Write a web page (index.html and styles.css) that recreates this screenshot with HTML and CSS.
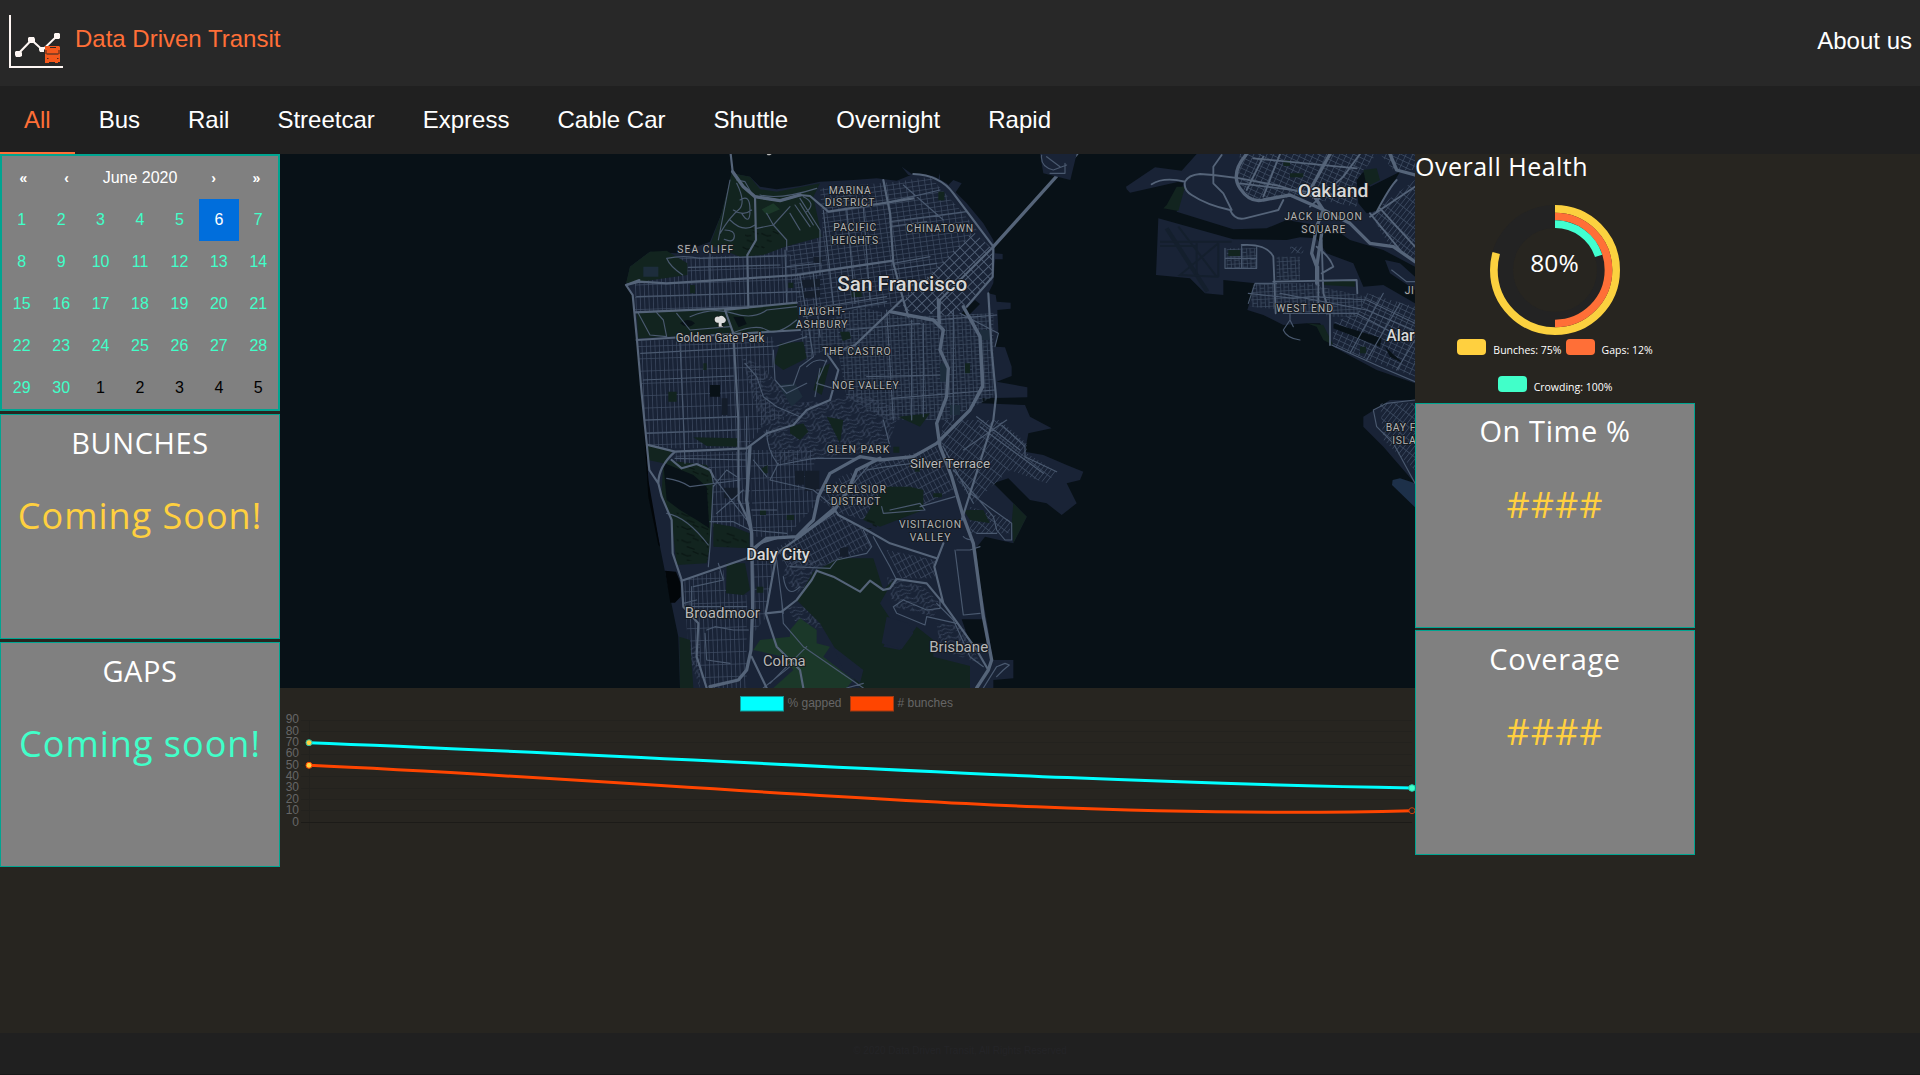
FILE: index.html
```html
<!DOCTYPE html>
<html lang="en">
<head>
<meta charset="utf-8">
<title>Data Driven Transit</title>
<link rel="stylesheet" href="styles.css">
</head>
<body>
<header class="topbar">
  <svg class="logo" width="56" height="56" viewBox="0 0 56 56">
    <path d="M2 1V53H55" fill="none" stroke="#fff7f4" stroke-width="2"/>
    <path d="M10 40L23.500 26L34.500 36L49.500 21.500" fill="none" stroke="#fff7f4" stroke-width="2"/>
    <path d="M8 37h5l1 2v3l-2 1H8l-1-2v-3zM21 23h5l1 2v3l-2 1h-4l-1-2v-3zM32 33h4v5h-4l-1-2v-2zM47 19h4l1 1v4l-1 1h-4l-1-1v-4z" fill="#fff7f4"/>
    <path d="M37 32h14l1 1v15h-2v1h-3v-1h-6v1h-4z" fill="#f4581c"/>
    <path d="M42 33.500h6M38.500 40h12" stroke="#282828"/>
    <path d="M38 36v4M51 36v4M39 44.500h1.500M49 44.500h1.500" stroke="#4a2a1e"/>
  </svg>
  <h1 class="brand">Data Driven Transit</h1>
  <a class="about">About us</a>
</header>
<nav class="tabs">
  <a class="tab active">All</a><a class="tab">Bus</a><a class="tab">Rail</a><a class="tab">Streetcar</a><a class="tab">Express</a><a class="tab">Cable Car</a><a class="tab">Shuttle</a><a class="tab">Overnight</a><a class="tab">Rapid</a>
</nav>
<main class="dashboard">
  <section class="left">
    <div class="calendar">
      <div class="cal-nav"><b>«</b><b>‹</b><span>June 2020</span><b>›</b><b>»</b></div>
      <div class="days">
        <span>1</span><span>2</span><span>3</span><span>4</span><span>5</span><span class="selected">6</span><span>7</span>
        <span>8</span><span>9</span><span>10</span><span>11</span><span>12</span><span>13</span><span>14</span>
        <span>15</span><span>16</span><span>17</span><span>18</span><span>19</span><span>20</span><span>21</span>
        <span>22</span><span>23</span><span>24</span><span>25</span><span>26</span><span>27</span><span>28</span>
        <span>29</span><span>30</span><span class="next">1</span><span class="next">2</span><span class="next">3</span><span class="next">4</span><span class="next">5</span>
      </div>
    </div>
    <div class="card"><h2>BUNCHES</h2><p class="yellow">Coming Soon!</p></div>
    <div class="card"><h2>GAPS</h2><p class="mint">Coming soon!</p></div>
  </section>

  <section class="center">
    <svg class="map" width="1135" height="534" viewBox="-960 12 3405 1602">
      <defs>
        <pattern id="avenues" width="13" height="37" patternUnits="userSpaceOnUse" patternTransform="rotate(-2)"><path class="st" d="M1 0V37M0 1H13"/></pattern>
        <pattern id="blocks" width="19" height="14" patternUnits="userSpaceOnUse" patternTransform="rotate(-8)"><path class="st" d="M1 0V14M0 1H19"/></pattern>
        <pattern id="soma" width="22" height="20" patternUnits="userSpaceOnUse" patternTransform="rotate(-44)"><path class="st wide" d="M1 0V20M0 1H22"/></pattern>
        <pattern id="mission" width="24" height="22" patternUnits="userSpaceOnUse" patternTransform="rotate(-3)"><path class="st" d="M1 0V22M0 1H24M12 0V22M12 12H24"/></pattern>
        <pattern id="slant" width="13" height="24" patternUnits="userSpaceOnUse" patternTransform="rotate(-28)"><path class="st" d="M1 0V24M0 1H13"/></pattern>
        <pattern id="eastgrid" width="18" height="15" patternUnits="userSpaceOnUse" patternTransform="rotate(25)"><path class="st" d="M1 0V15M0 1H18"/></pattern>
        <pattern id="diag" width="12" height="30" patternUnits="userSpaceOnUse" patternTransform="rotate(38)"><path class="st" d="M1 0V30M0 1H12"/></pattern>
        <pattern id="hills" width="64" height="40" patternUnits="userSpaceOnUse" patternTransform="rotate(-25)"><path class="st" d="M0 8C16 -4 22 26 38 16S52 0 64 8M0 21C16 9 20 39 36 29S52 13 64 21M0 34C18 24 22 48 40 40S54 26 64 34M12 0V12M38 16V32M52 20V40"/></pattern>
        <pattern id="ridges" width="60" height="40" patternUnits="userSpaceOnUse"><path d="M4 10L22 18L34 16M20 30L44 38M38 4L56 12" fill="none" stroke="#0a1714" stroke-width="4"/></pattern>
      </defs>
      <rect class="water" x="-960" y="12" width="3405" height="1602"/>

      <!-- Peninsula -->
      <path class="land" d="M395 70L450 80L480 110L530 118L600 108L660 95L760 90L830 85L890 92L940 72L1000 78L1040 100L1100 160L1150 220L1180 270L1185 310L1208 312V328H1185L1180 400L1165 430L1187 435L1190 455L1232 458V476L1192 480L1195 540L1185 590L1215 592L1235 650V678L1190 695L1282 712V742L1145 745V760L1275 765L1290 800L1355 835L1285 850L1275 905L1330 915L1400 945L1450 965L1440 990L1400 1000L1430 1060L1385 1095L1340 1060L1290 1050L1225 985L1180 1000L1240 1060L1280 1100L1240 1180L1155 1160L1128 1195L1140 1300L1165 1440L1178 1530H1240V1585L1180 1590V1614H240L235 1460L210 1340L180 1190L150 1040L135 880L128 780L110 540L98 440L78 405L90 350L150 305L230 310L290 290L330 275L365 190Z"/>
      <path d="M95 430L112 560L135 810L145 990L180 1190L175 1185L145 1040L130 810ZM195 1262L228 1265L242 1300V1340L225 1358H211Z" fill="#020609"/>
      <path class="land" d="M1085 100L1065 130L1040 110L1060 90ZM905 50L940 75H925ZM1020 68V90H1014Z"/>

      <!-- Street grids -->
      <path fill="url(#avenues)" d="M200 325L440 315L560 290L600 375V460L105 487V400ZM113 572L520 560V650L470 720L560 810H133ZM133 810H500L440 895H140ZM225 905H450V1130L340 1020L230 940ZM450 900H640L650 1060L560 1160H460ZM250 1290L370 1260L380 1330L440 1335V1614H320L265 1500ZM460 1200H530L500 1400L460 1450ZM330 1020L440 1010V1130H330Z"/>
      <path fill="url(#blocks)" d="M660 115L890 95L990 80L1090 190L1130 240L980 385L900 470L600 480L560 290L670 260Z"/>
      <path fill="url(#soma)" d="M1120 245L1180 300L1175 390L1060 500L905 480L915 445Z"/>
      <path fill="url(#mission)" d="M600 545L780 470L900 500L1180 490V740L1040 810H860L740 740L710 580L620 630Z"/>
      <path fill="url(#slant)" d="M660 1050L720 980L860 930L1010 890L1060 1020L960 1070L850 1050L830 1120L720 1090ZM520 1200L700 1090L800 1140L815 1190L700 1240L560 1250ZM860 1200L1005 1230V1285L900 1285Z"/>
      <path fill="url(#diag)" d="M1030 810H1200L1280 880V910L1370 965L1340 1000L1230 960L1120 1060L1065 980L1020 880ZM1110 1070L1230 1110V1150L1110 1150Z"/>
      <path fill="url(#hills)" d="M425 620L490 650L580 760L690 750L780 730L900 780L860 900L650 900L500 850L470 780ZM480 820L640 790L820 820L840 900L640 930L530 940ZM560 1230L700 1230L690 1260L640 1290L590 1330L550 1280ZM560 1370L620 1370L680 1430L600 1440ZM860 1280L970 1310L1020 1360L1000 1400L880 1370ZM1010 1420L1090 1430L1140 1540L1020 1500ZM860 1590L970 1580V1614H860ZM260 1490L300 1480V1614L280 1560Z"/>

      <!-- Parks -->
      <path class="park" d="M395 70L450 80L480 118L530 125L660 100L640 140L665 260L555 290L490 315L420 320L330 285L365 190ZM78 400L90 350L150 305L200 302L262 340V375L120 395ZM110 490L360 478L590 458L600 540L395 550L115 565ZM540 580L610 575L620 625L550 660L522 640ZM660 655L690 640L665 735L640 720ZM140 887L220 900L190 940L145 930ZM190 930L320 945L340 980L330 1190L320 1240L230 1245L215 1110L185 1030ZM340 1120L400 1130L448 1150V1195L340 1190ZM380 1240L435 1240L450 1320L430 1335L378 1330ZM280 862L412 865V890L320 888ZM570 830L610 820L625 845L600 870L570 850ZM680 800L730 810L720 880ZM850 1010L930 1010L970 1020V1080L840 1130L790 1110ZM640 1265L720 1225L820 1225L850 1320L880 1290L840 1360L880 1420L850 1490L900 1500L950 1430L1000 1470V1520L1110 1548V1614H780L720 1520L660 1420L590 1350ZM1090 1080L1150 1080L1170 1120L1110 1110ZM895 800L990 790L960 830ZM238 1460L270 1470L280 1614H240ZM1240 1060L1280 1100L1240 1180L1235 1120Z"/>
      <path class="land" d="M860 1400L925 1420L940 1450L905 1498L845 1480ZM700 1490L790 1560L780 1600L730 1560Z"/>
      <path class="field" d="M570 1440L600 1405L650 1440V1480L690 1490L670 1520L760 1590L740 1614H520L580 1560L550 1520L460 1500L480 1470L570 1460ZM485 178L520 160L540 178L500 195Z"/>
      <path fill="url(#ridges)" d="M440 230L555 240L480 305H425ZM205 940L325 950V1230L230 1235V1080ZM350 1140L440 1150V1190H350ZM790 1100L830 1110V1140L795 1135Z"/>
      <path class="water" d="M190 938L280 975L320 1010L328 1135L290 1110L240 1080L200 1050ZM1085 1408H1150L1160 1480H1110ZM400 500l30 0 10 22-24 10zM240 520q25-20 45 0q-20 20-45 0zM1085 490l40-40 15 12-38 38zM330 705h30v35h-30z"/>
      <path class="civic" d="M605 390l55-4v24l-50 4zM608 425l52-5v22l-48 3zM640 320h25v18h-25zM615 962h43v60h-43zM585 962h28v42h-28zM372 1013h42v32h-42zM365 745h18v50h-18zM720 1195l25-5v30h-25z"/>
      <path class="slope" d="M535 705L585 700L608 740L575 770ZM130 350h45v30h-45zM1050 765h30v30h-30zM1020 640h22v55h-22zM1140 540h30v30h-30z"/>
      <path class="park" d="M270 405h15v25h-15zM565 398h15v16h-15zM755 425h30v16h-30zM1015 125h18v26h-18zM205 725h25v30h-25zM310 640h10v20h-10zM480 1080h18v15h-18zM560 1095h22v15h-22zM1095 640h15v30h-15zM880 890h18v18h-18zM720 545l28 0 5 20-25 8zM470 1310h20v18h-20zM485 955l18-10v25h-12zM945 955h14v10h-14zM1000 1030h26v12h-26z"/>

      <!-- Secondary roads -->
      <g class="roads minor">
        <path d="M410 90L435 95L455 130M410 100Q440 160 415 180T360 250M400 180Q430 200 455 180M390 210Q430 250 465 225M500 190L520 225L560 270V300M470 235L520 225L570 170M600 145L660 240V375M610 140Q650 160 620 185M420 150q30-20 30 30t-25 10M375 240q30 0 28 20t-30 8M200 325Q250 315 300 325L560 318M200 325Q210 350 248 375M265 352L540 345M560 350L660 340M555 300L560 460M330 310V470M110 440L600 425M115 490L150 555L200 560L190 510L170 488M230 490L270 540L390 530M270 500Q340 470 400 490T500 480L590 470M395 550Q470 520 500 540T590 510M390 90L355 270M570 190L600 240M585 165L630 230M600 160L640 225M480 135Q540 150 650 115"/>
        <path d="M122 610L400 595L530 588L620 560M130 690L400 678M133 810L410 800M240 580L250 810L255 940M520 600L525 690L560 730L620 700M435 640L470 680L490 740L530 770L600 800M630 560L640 620L600 650L580 705L540 710M620 650Q650 620 680 635M660 655L645 740M680 630L650 700L700 715M600 375L630 560M640 370L660 560M670 180L700 460M740 175L765 460M790 170L810 450M860 158L1020 120M870 215L1100 185M870 230L980 215M910 105L1030 210M880 340L990 320M870 360L1010 340M890 415L1000 390M600 480L860 440M610 500L860 455M740 540L960 520M860 480L880 810M935 510V810M970 520V800M800 680L1020 675M875 745L1185 720M1000 510L1130 500L1190 495M1080 490L1195 550L1185 590M1060 480V810"/>
        <path d="M140 850L410 840M225 925L440 930M330 1115L400 1115L450 1140L560 1150M335 970L340 1000L330 1190L325 1250M200 985Q240 990 270 1010L420 990M200 1090Q260 1100 325 1185M340 1010L380 960L410 980M340 980L440 1110M350 1090L430 1020M440 800V1110M455 1080L530 1080M500 840Q500 900 535 945L640 925H780M535 940L510 990L640 1020L700 1070L715 1095M460 930L500 980M650 1020H700M800 960L860 950L1020 930M870 890L850 810M760 1000L820 930M870 1080L960 1060L975 1080L850 1090L845 1070M960 1070L1065 1040M1030 890L1120 1060M1060 960L1180 1100L1190 1140L1215 1170H1235V1120L1110 1030M1130 1150H1190M1200 820L1275 890V920L1370 965M1130 800L1260 900M1220 810L1090 900M1140 830L1330 970M1070 1200H1110L1140 1190M1065 1200L1090 1395L1140 1390M1090 1160Q1100 1170 1120 1170"/>
        <path d="M280 1310L370 1290L355 1240M250 1360L290 1350M275 1310V1370L440 1370M320 1440L345 1430L400 1440L445 1440M315 1450L320 1530L390 1540M530 1230L550 1390M570 1250L690 1255L710 1230L800 1210L815 1190L790 1140M600 1310Q560 1350 550 1280M880 1370L910 1350L980 1380L1020 1375V1350M880 1370L890 1390L975 1425L980 1400L1070 1420M1010 1360L1060 1410L1110 1520L1150 1550M820 1160L870 1250L890 1290M1190 1580L1210 1560L1228 1545L1215 1540L1190 1550L1150 1614M510 1600L620 1490M490 1614L570 1550M740 1614L790 1600M545 1350L550 1420L610 1490L790 1614"/>
      </g>
      <!-- Highways and arterials -->
      <g class="roads">
        <path d="M392 12L398 65L430 110L465 140L540 152L600 135L630 138L685 185L860 158L940 145"/>
        <path d="M465 140L468 270L442 315L445 472L375 480L400 550L415 810L416 1050L440 1100L455 1150"/>
        <path d="M80 405L118 395L200 400L440 385L590 375L700 358L880 332M110 570L400 552L600 540M105 487L445 472L590 458M850 90L870 190L880 340L910 450L925 500"/>
        <path d="M118 390L78 405L98 435L110 560L125 730L140 880L148 960L175 1000L185 1040L215 1110L218 1210L245 1290L250 1370L295 1420L290 1520L320 1614M140 884L225 905L440 895L500 850L580 825L620 780L690 750L715 660L680 610M225 905Q175 950 175 1000M215 930L245 955L290 942L330 960L340 980"/>
        <path d="M940 72Q1020 75 1060 130L1180 290L1178 380L1100 470M1180 290L1020 450L1015 500M905 450L765 585L680 615M1165 430L1175 600L1188 740L1180 810L1085 1110M1110 500L1140 560L1150 700L1110 780"/>
        <path d="M245 1292L440 1225L480 1180L530 1165M715 1095L800 1140L870 1180L1010 1225M715 1095L700 1075L600 1160L530 1210L510 1320L497 1390L530 1490L600 1560L610 1614M497 1390L545 1385L590 1350L635 1290L650 1262L700 1280L780 1325L810 1292L850 1320L870 1315L890 1287L980 1300L1030 1360M1030 1180L1003 1250L1030 1360L1080 1430L1130 1500L1165 1560M455 1520L500 1614"/>
        <g class="freeway">
          <path d="M398 65L430 110L465 140L540 152L600 135M1430 12L1180 290M870 485L1000 510L1030 540L1020 600L1045 655L1040 740L1010 820L1020 890L1055 980L1090 1100L1120 1180L1150 1400L1175 1530L1165 1560L1130 1614M1015 450L1018 520M1090 470L1140 560L1148 710L1110 780L1010 880L940 920L840 930L780 920L690 970L655 1040L640 1110L590 1160L500 1165L455 1200M840 925L770 960L745 1020L700 1085L590 1165M450 890L440 1050L455 1150L458 1370L453 1500L440 1560L415 1590L330 1610"/>
        </g>
      </g>

      <!-- East Bay -->
      <path class="land" d="M1320 12H1430L1411 90L1330 70ZM1578 110L1580 118L1590 128L1736 95L1750 100L1730 185L1900 238L2000 235L2060 210L2200 235L2250 270L2350 300L2445 350V12H1790L1745 62L1665 52ZM1675 205L1900 268L2060 270L2100 262L2150 265L2180 310L2260 340L2290 410L2350 405L2445 460V700L2330 660L2200 590L2160 520H2120L2050 525L1990 495L1942 480L1966 400L1870 390V435L1815 430L1770 385L1668 375ZM2355 330L2400 340L2445 380V420L2370 370ZM2290 800L2370 750H2445V1000L2350 890L2290 830Z"/>
      <path d="M2378 990L2400 985L2445 1000V1072L2376 1005Z" fill="#1d3049"/>
      <path fill="url(#eastgrid)" d="M1920 12H2330L2270 90V170L2100 140L1960 150L1910 100ZM2340 12H2445V60L2380 60ZM2300 430L2445 470V680L2200 590V520L2280 480Z"/>
      <path fill="url(#diag)" d="M2310 190L2445 90V330L2370 290ZM2070 290H2110V310H2070ZM2340 760H2445V960L2350 870Z"/>
      <path fill="url(#mission)" d="M1880 295H1970V355H1880ZM2030 320H2100V390H2030ZM1960 400H2160V490L1950 470ZM2160 410L2300 440L2270 500H2180Z"/>
      <path class="water" d="M2270 90L2290 65L2310 110L2400 65L2350 150L2340 180L2300 190L2275 160ZM2200 520L2345 565L2340 590L2200 535ZM2355 590L2410 640L2370 620Z"/>
      <path class="park" d="M1700 165L1730 110H1755L1735 183L1690 175ZM2120 520L2170 525L2200 585L2170 570L2150 530ZM2170 395L2265 390V410L2170 405ZM2290 60L2330 55L2340 90L2300 110ZM1885 300h35v18h-35zM2050 30h20v18h-20zM2070 70h40v12h-40zM2280 590h18v20h-18z"/>
      <path d="M1700 235L1822 425" stroke="#141f2d" stroke-width="13" fill="none"/>
      <path d="M1680 275H1895M1680 288H1790M1735 230L1850 380L1740 375L1855 280M1790 280V370M1855 280V380" stroke="#141f2d" stroke-width="6" fill="none"/>
      <g class="roads east">
        <path d="M1655 103Q1690 80 1755 95M1755 95Q1765 75 1800 72L1840 75L1920 85L2040 108L2140 140M1755 95Q1750 120 1775 135Q1820 165 1890 180Q1905 212 1935 205L2035 180L2050 150M1865 15L1840 50V100L1870 130L1895 180"/>
        <path class="freeway" d="M1940 12Q1890 70 1920 115T1990 150L2070 135L2160 175L2250 220L2310 280L2380 290L2445 335M2190 12L2130 120L2170 180L2150 230L2135 310L2150 350M2165 250L2150 350V400M2370 12L2390 60L2445 75"/>
        <path d="M2280 12L2230 80L2130 170M1990 20L1940 120M1920 100L2240 140M1960 25L2270 55M2040 12L1990 140M2330 185Q2370 110 2390 90M2310 190L2400 300M2340 175L2445 290M2445 110L2310 200M2155 350V490M2165 270L2170 430L2190 490V585M2020 395L2270 390L2272 430M1925 285Q2000 280 2020 320L2027 490M2150 290Q2190 320 2200 350L2165 370"/>
      </g>
      <g class="roads minor">
        <path d="M1875 295V355H1970V290M1925 285V355M1875 325H1970M1945 430L2080 445L2140 440L2300 450L2445 520M1945 460L1965 400L2030 400M2040 430L2300 480L2440 540M2050 490H2270L2400 560M2195 585L2340 650L2445 695M2350 430L2250 610M2400 460L2300 630M2445 570L2390 660M2070 490V510L2050 540Q2060 565 2100 570M2070 510L2080 530M2375 360L2420 395H2445M2445 750L2360 760L2320 780L2330 830L2380 880L2445 1000M1325 15Q1320 50 1360 60L1400 45M1340 20L1380 50M1350 70H1395V40"/>
      </g>

      <!-- Place names -->
      <g class="labels district">
        <text x="749" y="131" textLength="126">MARINA</text><text x="749" y="168" textLength="149">DISTRICT</text>
        <text x="764" y="244" textLength="129">PACIFIC</text><text x="764" y="282" textLength="141">HEIGHTS</text>
        <text x="1019" y="246" textLength="200">CHINATOWN</text><text x="316" y="309" textLength="168">SEA CLIFF</text>
        <text x="665" y="495" textLength="138">HAIGHT-</text><text x="665" y="533" textLength="155">ASHBURY</text>
        <text x="769" y="615" textLength="205">THE CASTRO</text><text x="796" y="718" textLength="200">NOE VALLEY</text>
        <text x="774" y="909" textLength="188">GLEN PARK</text><text x="767" y="1029" textLength="181">EXCELSIOR</text><text x="767" y="1066" textLength="149">DISTRICT</text>
        <text x="990" y="1135" textLength="186">VISITACION</text><text x="990" y="1173" textLength="122">VALLEY</text>
        <text x="2169" y="210" textLength="233">JACK LONDON</text><text x="2170" y="248" textLength="132">SQUARE</text>
        <text x="2114" y="487" textLength="170">WEST END</text>
        <text class="from" x="2414" y="432">JI</text><text class="from" x="2357" y="843">BAY F</text><text class="from" x="2377" y="881">ISLA</text>
      </g>
      <g class="labels">
        <text x="907" y="423" font-size="61" textLength="390" lengthAdjust="spacingAndGlyphs">San Francisco</text>
        <text x="2199" y="142" font-size="57" textLength="212" lengthAdjust="spacingAndGlyphs">Oakland</text>
        <text x="534" y="1231" font-size="51" textLength="191" lengthAdjust="spacingAndGlyphs">Daly City</text>
        <text class="from" x="2359" y="573" font-size="49" textLength="85" lengthAdjust="spacingAndGlyphs">Alar</text>
      </g>
      <g class="labels town">
        <text x="367" y="1405" font-size="45" textLength="225" lengthAdjust="spacingAndGlyphs">Broadmoor</text>
        <text x="1076" y="1506" font-size="45" textLength="177" lengthAdjust="spacingAndGlyphs">Brisbane</text>
        <text x="553" y="1548" font-size="45" textLength="128" lengthAdjust="spacingAndGlyphs">Colma</text>
        <text x="1050" y="955" font-size="39" textLength="240" lengthAdjust="spacingAndGlyphs">Silver Terrace</text>
        <text x="360" y="576" font-size="36" textLength="266" lengthAdjust="spacingAndGlyphs">Golden Gate Park</text>
      </g>
      <path d="M356 530V518Q344 520 344 508Q345 498 356 500Q367 494 374 503Q382 510 373 518L365 520V527L372 530Z" fill="#ddd" stroke="#111" stroke-width="3" paint-order="stroke"/>
      <path d="M500 12H515L510 16H503Z" fill="#bbb"/>
    </svg>

    <svg class="chart" width="1135" height="152" viewBox="280 688 1135 152">
      <path d="M301 720.500H1412M301 731.500H1412M301 742.500H1412M301 754.500H1412M301 765.500H1412M301 776.500H1412M301 788.500H1412M301 799.500H1412M301 810.500H1412M309.500 720V831" stroke="#23221e" fill="none"/>
      <path d="M301 822.500H1412" stroke="#1c1b18"/>
      <rect x="740.500" y="696.500" width="43" height="14.500" fill="#0ff" stroke="#199"/>
      <rect x="850.500" y="696.500" width="43" height="14.500" fill="#ff4500" stroke="#a13a14"/>
      <g class="tick"><text x="787.500" y="707">% gapped</text><text x="897.500" y="707">#&#160;bunches</text></g>
      <g class="tick axis"><text x="299" y="723">90</text><text x="299" y="735">80</text><text x="299" y="746">70</text><text x="299" y="757">60</text><text x="299" y="769">50</text><text x="299" y="780">40</text><text x="299" y="791">30</text><text x="299" y="803">20</text><text x="299" y="814">10</text><text x="299" y="826">0</text></g>
      <path d="M309 765.300C677 781.500 1044 821 1412 810.700" fill="none" stroke="#ff4500" stroke-width="3"/>
      <path d="M309 742.700C677 756.500 1044 782 1412 788" fill="none" stroke="#0ff" stroke-width="3"/>
      <circle cx="309" cy="742.700" r="3" fill="#ffd03f" stroke="#2ec4a4"/>
      <circle cx="309" cy="765.300" r="3" fill="#ffd03f" stroke="#ff4500"/>
      <circle cx="1412" cy="788" r="3.300" fill="#41ffc9" stroke="#20d0b0"/>
      <circle cx="1412" cy="810.700" r="3" fill="#272520" stroke="#c8420f"/>
    </svg>
  </section>

  <section class="right">
    <div class="health">
      <h2>Overall Health</h2>
      <svg class="donut" width="130" height="130" viewBox="-65 -65 130 130">
        <circle r="53.500" fill="none" stroke="#232323" stroke-width="23"/>
        <g fill="none" stroke-width="7.700" transform="rotate(-90)">
          <circle r="61.150" pathLength="100" stroke="#fbd13f" stroke-dasharray="79.500 20.500"/>
          <circle r="53.500" pathLength="100" stroke="#ff6f37" stroke-dasharray="50 50"/>
          <circle r="45.850" pathLength="100" stroke="#41ffd0" stroke-dasharray="20 80"/>
        </g>
        <text x="-.500" y="1.500" text-anchor="middle">80%</text>
      </svg>
      <div class="keys">
        <div class="key"><i class="bg-yellow"></i>Bunches: 75%</div>
        <div class="key"><i class="bg-orange"></i>Gaps: 12%</div>
      </div>
      <div class="keys"><div class="key"><i class="bg-mint"></i>Crowding: 100%</div></div>
    </div>
    <div class="card first"><h2>On Time %</h2><p class="yellow">####</p></div>
    <div class="card"><h2>Coverage</h2><p class="yellow">####</p></div>
  </section>
</main>
<footer class="footer">© 2020 Data Driven Transit, All Rights Reserved</footer>
</body>
</html>
```
FILE: styles.css
```css
* { box-sizing: border-box; }
body {
  margin: 0;
  height: 1075px;
  display: flex;
  flex-direction: column;
  overflow: hidden;
  background: #272520;
  color: #fff;
  font-family: "Liberation Sans", Arial, sans-serif;
}
h1, h2, p { margin: 0; font-weight: 400; }

.topbar { height: 86px; display: flex; align-items: flex-start; padding: 14px 8px 0; background: #282828; }
.logo { display: block; }
.brand { margin: 11px 0 0 11px; font-size: 24px; line-height: 28px; color: #ff6f37; }
.about { margin: 13px 0 0 auto; font-size: 24px; line-height: 28px; }

.tabs { height: 68px; display: flex; background: #202020; }
.tab { padding: 20px 24px 0; font-size: 24px; line-height: 28px; border-bottom: 2px solid transparent; }
.tab.active { color: #ff6f37; border-bottom-color: #ff6f37; }

.dashboard { height: 879px; display: grid; grid-template-columns: 280px 1135px 280px; align-items: start; }
.left { display: flex; flex-direction: column; gap: 3px; }
.calendar { height: 257px; border: 2px solid #00a591; background: #808080; font-size: 16px; }
.cal-nav { height: 43px; display: grid; grid-template-columns: 43px 43px 1fr 43px 43px; align-items: center; text-align: center; }
.cal-nav b { font-size: 14px; }
.days { display: grid; grid-template-columns: repeat(7, 1fr); grid-auto-rows: 42px; line-height: 41px; text-align: center; color: #41ffc9; }
.days .selected { background: #006edc; color: #fff; }
.days .next { color: #000; }

.card {
  height: 225px;
  padding-top: 7px;
  border: 1px solid #00a591;
  background: #808080;
  text-align: center;
  font-family: "Open Sans", sans-serif;
}
.card h2 { font-size: 29px; line-height: 42px; letter-spacing: .6px; }
.card p { margin-top: 28px; font-size: 36px; line-height: 48px; letter-spacing: 1px; white-space: nowrap; }
.card.first { padding-top: 6px; }
.card.first p { margin-top: 29px; }
.yellow { color: #ffd03f; }
.mint { color: #41ffc9; }

.center { display: flex; flex-direction: column; }
.map, .chart { display: block; }
.water { fill: #081117; }
.land { fill: #192336; }
.park { fill: #12241f; }
.field { fill: #1b3829; }
.civic { fill: #141d2a; }
.slope { fill: #1d2d3c; }
.st { fill: none; stroke: #3d4b61; stroke-width: 2.400; }
.st.wide { stroke: #4f5e74; stroke-width: 3.200; }
.roads { fill: none; stroke: #556479; stroke-width: 6.500; stroke-linejoin: round; stroke-linecap: round; }
.roads.minor { stroke: #4a596f; stroke-width: 3.500; }
.roads.east { stroke-width: 5.500; }
.freeway { stroke-width: 10; }
.labels { font-family: Roboto, sans-serif; font-weight: 500; fill: #d8d8d8; text-anchor: middle; stroke: #151a20; stroke-width: 6; stroke-linejoin: round; paint-order: stroke; }
.district { font-size: 31px; font-weight: 400; fill: #b4b4b4; }
.town { font-weight: 400; fill: #b8b8b8; }
.labels .from { text-anchor: start; }
.district .from { letter-spacing: 2px; }
.tick { font-size: 12px; fill: #666; }
.axis { text-anchor: end; }

.right { display: flex; flex-direction: column; gap: 2px; font-family: "Open Sans", sans-serif; }
.health { height: 247px; }
.health h2 { height: 51px; font-size: 25px; line-height: 25px; letter-spacing: .5px; }
.donut { display: block; margin: 0 auto; }
.donut text { font-size: 24.500px; fill: #fff; }
.keys { height: 37px; display: flex; justify-content: center; gap: 4px; padding-top: 4px; }
.key { display: flex; font-size: 10.500px; line-height: 22px; }
.key i { width: 29px; height: 16px; margin-right: 7px; border-radius: 4px; }
.bg-yellow { background: #ffd03f; }
.bg-orange { background: #ff6f37; }
.bg-mint { background: #41ffc9; }

.footer { height: 42px; background: #202020; border-bottom: 1px solid #181818; color: #242427; font-size: 10px; line-height: 35px; text-align: center; }
```
